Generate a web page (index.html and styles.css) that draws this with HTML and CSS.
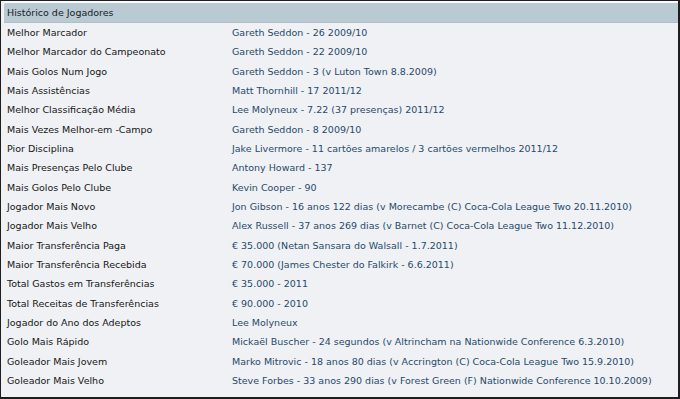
FILE: index.html
```html
<!DOCTYPE html>
<html>
<head>
<meta charset="utf-8">
<link rel="stylesheet" href="styles.css">
</head>
<body>
<div class="panel">
  <div class="header">Histórico de Jogadores</div>
  <div class="rows">
    <div class="row"><span class="label">Melhor Marcador</span><span class="value">Gareth Seddon - 26 2009/10</span></div>
    <div class="row"><span class="label">Melhor Marcador do Campeonato</span><span class="value">Gareth Seddon - 22 2009/10</span></div>
    <div class="row"><span class="label">Mais Golos Num Jogo</span><span class="value">Gareth Seddon - 3 (v Luton Town 8.8.2009)</span></div>
    <div class="row"><span class="label">Mais Assistências</span><span class="value">Matt Thornhill - 17 2011/12</span></div>
    <div class="row"><span class="label">Melhor Classificação Média</span><span class="value">Lee Molyneux - 7.22 (37 presenças) 2011/12</span></div>
    <div class="row"><span class="label">Mais Vezes Melhor-em -Campo</span><span class="value">Gareth Seddon - 8 2009/10</span></div>
    <div class="row"><span class="label">Pior Disciplina</span><span class="value">Jake Livermore - 11 cartões amarelos / 3 cartões vermelhos 2011/12</span></div>
    <div class="row"><span class="label">Mais Presenças Pelo Clube</span><span class="value">Antony Howard - 137</span></div>
    <div class="row"><span class="label">Mais Golos Pelo Clube</span><span class="value">Kevin Cooper - 90</span></div>
    <div class="row"><span class="label">Jogador Mais Novo</span><span class="value">Jon Gibson - 16 anos 122 dias (v Morecambe (C) Coca-Cola League Two 20.11.2010)</span></div>
    <div class="row"><span class="label">Jogador Mais Velho</span><span class="value">Alex Russell - 37 anos 269 dias (v Barnet (C) Coca-Cola League Two 11.12.2010)</span></div>
    <div class="row"><span class="label">Maior Transferência Paga</span><span class="value">€ 35.000 (Netan Sansara do Walsall - 1.7.2011)</span></div>
    <div class="row"><span class="label">Maior Transferência Recebida</span><span class="value">€ 70.000 (James Chester do Falkirk - 6.6.2011)</span></div>
    <div class="row"><span class="label">Total Gastos em Transferências</span><span class="value">€ 35.000 - 2011</span></div>
    <div class="row"><span class="label">Total Receitas de Transferências</span><span class="value">€ 90.000 - 2010</span></div>
    <div class="row"><span class="label">Jogador do Ano dos Adeptos</span><span class="value">Lee Molyneux</span></div>
    <div class="row"><span class="label">Golo Mais Rápido</span><span class="value">Mickaël Buscher - 24 segundos (v Altrincham na Nationwide Conference 6.3.2010)</span></div>
    <div class="row"><span class="label">Goleador Mais Jovem</span><span class="value">Marko Mitrovic - 18 anos 80 dias (v Accrington (C) Coca-Cola League Two 15.9.2010)</span></div>
    <div class="row"><span class="label">Goleador Mais Velho</span><span class="value">Steve Forbes - 33 anos 290 dias (v Forest Green (F) Nationwide Conference 10.10.2009)</span></div>
  </div>
</div>
</body>
</html>
```
FILE: styles.css
```css
html, body {
  margin: 0;
  padding: 0;
  background: #eff1f4;
}
body {
  width: 680px;
  height: 399px;
  overflow: hidden;
  font-family: "DejaVu Sans", sans-serif;
  font-size: 9.5px;
}
.panel {
  box-sizing: border-box;
  width: 680px;
  height: 399px;
  border: 1px solid #1e1e1e;
  border-right-width: 2px;
  border-bottom-width: 2px;
  padding: 0 0 2px 3px;
  background: #eff1f4;
  display: flex;
  flex-direction: column;
}
.header {
  height: 19px;
  line-height: 19px;
  background: #b9cad2;
  border-top: 2px solid #fafbfc;
  border-bottom: 1px solid #aebfc8;
  border-radius: 3px 0 0 0;
  padding-left: 3px;
  color: #15202a;
}
.rows {
  display: flex;
  flex-direction: column;
}
.row {
  height: 19.33px;
  line-height: 19.33px;
  display: grid;
  grid-template-columns: 228px 1fr;
  white-space: nowrap;
}
.label {
  color: #161616;
  padding-left: 3px;
}
.value {
  color: #28496b;
}
```
